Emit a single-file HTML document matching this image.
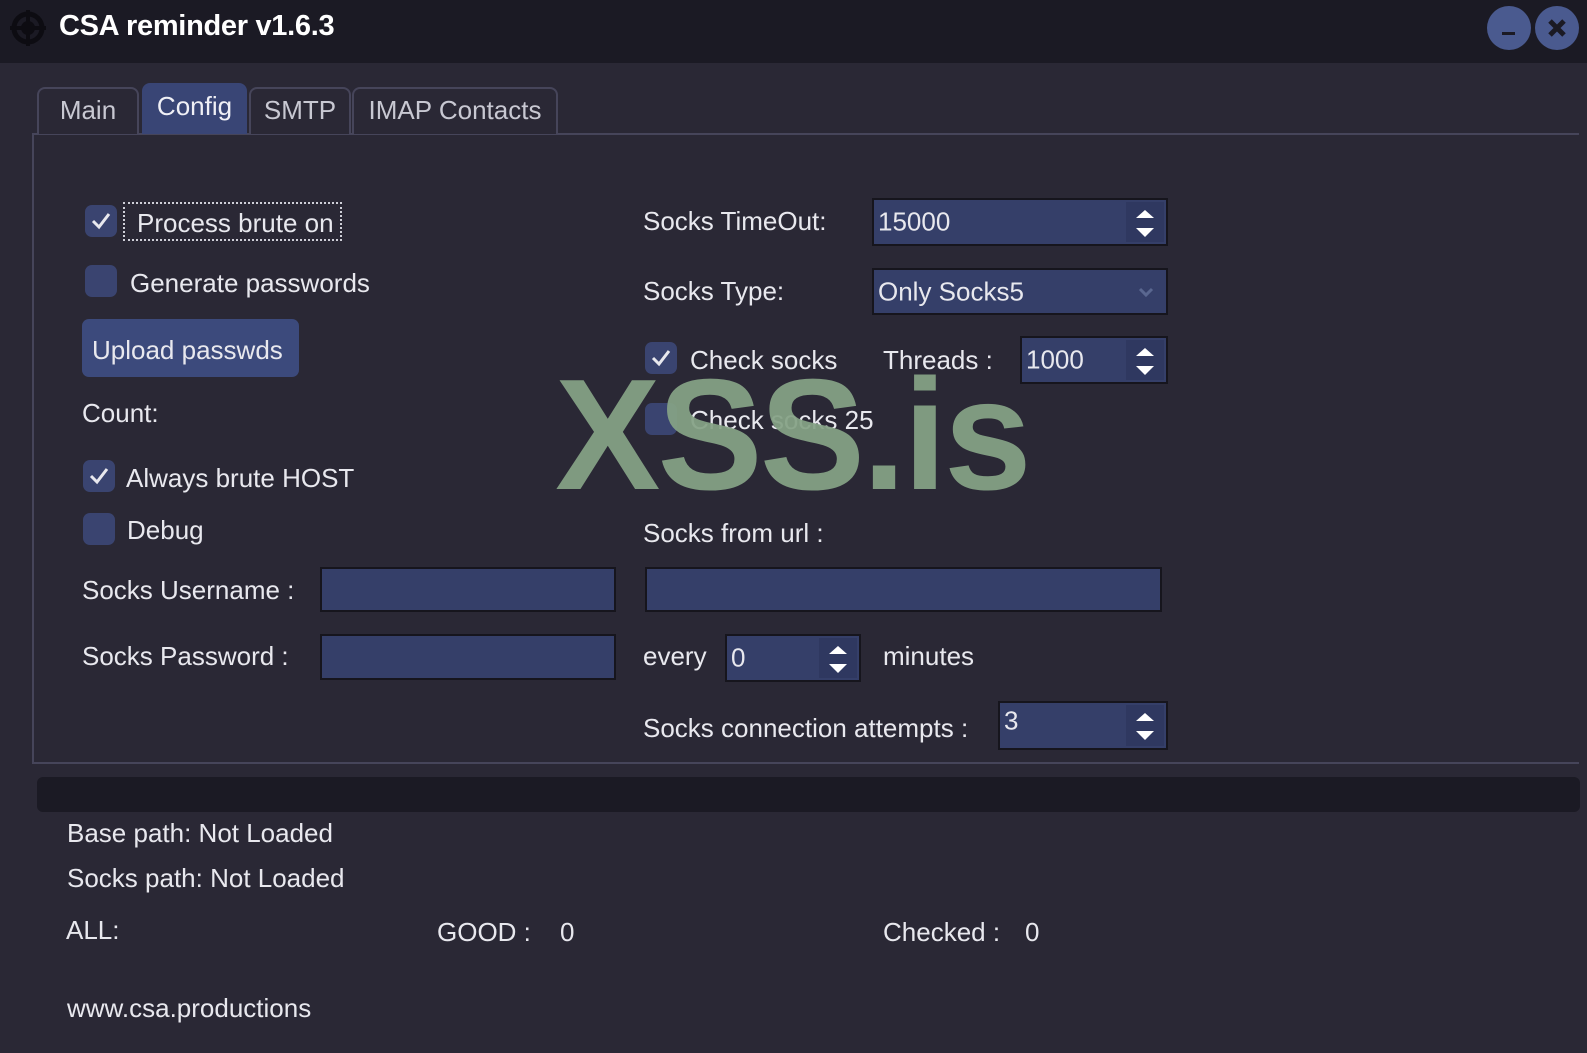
<!DOCTYPE html>
<html><head><meta charset="utf-8"><style>
*{margin:0;padding:0;box-sizing:border-box}
body{width:1587px;height:1053px;background:#2a2835;position:relative;overflow:hidden;font-family:"Liberation Sans",sans-serif;color:#e8e8ee;font-size:26px}
.a{position:absolute;white-space:nowrap}
.t{position:absolute;white-space:nowrap;line-height:30px;transform:translateY(-15px);letter-spacing:0px}
.cb{position:absolute;width:32px;height:32px;background:#3a4470;border-radius:7px}
.cb svg{position:absolute;left:6px;top:7px}
.in{position:absolute;background:#353f69;border:2px solid #16151d}
.in span{position:absolute;left:4px;top:50%;transform:translateY(-50%);font-size:26px}
.sp{position:absolute;right:2px;top:2px;bottom:2px;width:38px;background:#2f3860}
.tab{position:absolute;top:87px;height:47px;border:2px solid #46455a;border-bottom:none;border-radius:8px 8px 0 0;background:#2a2835;color:#c8c8d2;text-align:center;line-height:42px;font-size:26px}
</style></head><body>
<div class="a" style="left:0;top:0;width:1587px;height:63px;background:#1b1a24"></div>
<svg class="a" style="left:9px;top:9px" width="38" height="38" viewBox="0 0 38 38"><circle cx="19" cy="19" r="14" fill="none" stroke="#0d0c12" stroke-width="5"/><circle cx="19" cy="19" r="7" fill="#0d0c12"/><rect x="17" y="1" width="4" height="36" fill="#0d0c12"/><rect x="1" y="17" width="36" height="4" fill="#0d0c12"/></svg>
<div class="a" style="left:59px;top:10px;font-weight:bold;font-size:29px;color:#fff;letter-spacing:-0.3px">CSA reminder v1.6.3</div>
<div class="a" style="left:1487px;top:6px;width:44px;height:44px;border-radius:50%;background:#4a5a8f"></div>
<div class="a" style="left:1502px;top:32px;width:13px;height:3px;background:#1b1a24"></div>
<div class="a" style="left:1535px;top:6px;width:44px;height:44px;border-radius:50%;background:#4a5a8f"></div>
<svg class="a" style="left:1535px;top:6px" width="44" height="44"><path d="M15 15L29 29M29 15L15 29" stroke="#1b1a24" stroke-width="5"/></svg>

<div class="a" style="left:32px;top:133px;width:1547px;height:631px;border:2px solid #46455a;border-right:none"></div>
<div class="tab" style="left:37px;width:102px">Main</div>
<div class="tab" style="left:142px;top:83px;height:51px;width:105px;background:#394575;border-color:#394575;color:#f0f0f6">Config</div>
<div class="tab" style="left:249px;width:102px">SMTP</div>
<div class="tab" style="left:352px;width:206px">IMAP Contacts</div>

<div class="cb" style="left:85px;top:205px"><svg width="20" height="18"><path d="M2 9l6 6L18 2" stroke="#e8e8ee" stroke-width="3" fill="none"/></svg></div>
<div class="a" style="left:123px;top:202px;width:219px;height:39px;border:2px dotted #cfcfd8"></div>
<div class="t" style="left:137px;top:223px">Process brute on</div>
<div class="cb" style="left:85px;top:265px"></div>
<div class="t" style="left:130px;top:283px">Generate passwords</div>
<div class="a" style="left:82px;top:319px;width:217px;height:58px;background:#3c4a7c;border-radius:7px"></div>
<div class="t" style="left:92px;top:350px">Upload passwds</div>
<div class="t" style="left:82px;top:413px">Count:</div>
<div class="cb" style="left:83px;top:460px"><svg width="20" height="18"><path d="M2 9l6 6L18 2" stroke="#e8e8ee" stroke-width="3" fill="none"/></svg></div>
<div class="t" style="left:126px;top:478px">Always brute HOST</div>
<div class="cb" style="left:83px;top:513px"></div>
<div class="t" style="left:127px;top:530px">Debug</div>
<div class="t" style="left:82px;top:590px">Socks Username :</div>
<div class="in" style="left:320px;top:567px;width:296px;height:45px"></div>
<div class="t" style="left:82px;top:656px">Socks Password :</div>
<div class="in" style="left:320px;top:634px;width:296px;height:46px"></div>

<div class="t" style="left:643px;top:221px">Socks TimeOut:</div>
<div class="in" style="left:872px;top:198px;width:296px;height:48px"><span>15000</span><div class="sp"><svg width="38" height="44"><path d="M10 16L19 8L28 16Z M10 26L28 26L19 35Z" fill="#fff"/></svg></div></div>
<div class="t" style="left:643px;top:291px">Socks Type:</div>
<div class="in" style="left:872px;top:268px;width:296px;height:47px"><span>Only Socks5</span><svg class="a" style="right:12px;top:16px" width="16" height="12"><path d="M2 3L8 9L14 3" stroke="#5a6790" stroke-width="3" fill="none"/></svg></div>
<div class="cb" style="left:645px;top:342px"><svg width="20" height="18"><path d="M2 9l6 6L18 2" stroke="#e8e8ee" stroke-width="3" fill="none"/></svg></div>
<div class="t" style="left:690px;top:360px">Check socks</div>
<div class="t" style="left:883px;top:360px">Threads :</div>
<div class="in" style="left:1020px;top:336px;width:148px;height:48px"><span>1000</span><div class="sp"><svg width="38" height="44"><path d="M10 16L19 8L28 16Z M10 26L28 26L19 35Z" fill="#fff"/></svg></div></div>
<div class="cb" style="left:645px;top:403px"></div>
<div class="t" style="left:690px;top:420px">Check socks 25</div>
<div class="t" style="left:643px;top:533px">Socks from url :</div>
<div class="in" style="left:645px;top:567px;width:517px;height:45px"></div>
<div class="t" style="left:643px;top:656px">every</div>
<div class="in" style="left:725px;top:634px;width:136px;height:48px"><span>0</span><div class="sp"><svg width="38" height="44"><path d="M10 16L19 8L28 16Z M10 26L28 26L19 35Z" fill="#fff"/></svg></div></div>
<div class="t" style="left:883px;top:656px">minutes</div>
<div class="t" style="left:643px;top:728px">Socks connection attempts :</div>
<div class="in" style="left:998px;top:701px;width:170px;height:49px"><span style="top:40%">3</span><div class="sp"><svg width="38" height="44"><path d="M10 16L19 8L28 16Z M10 26L28 26L19 35Z" fill="#fff"/></svg></div></div>

<div class="a" style="left:555px;top:345px;font-weight:bold;font-size:158px;line-height:180px;color:#86a386;opacity:0.93;letter-spacing:-3px">XSS.is</div>

<div class="a" style="left:37px;top:777px;width:1543px;height:35px;background:#1b1a24;border-radius:6px"></div>
<div class="t" style="left:67px;top:833px">Base path: Not Loaded</div>
<div class="t" style="left:67px;top:878px">Socks path: Not Loaded</div>
<div class="t" style="left:66px;top:930px">ALL:</div>
<div class="t" style="left:437px;top:932px">GOOD :</div>
<div class="t" style="left:560px;top:932px">0</div>
<div class="t" style="left:883px;top:932px">Checked :</div>
<div class="t" style="left:1025px;top:932px">0</div>
<div class="t" style="left:67px;top:1008px">www.csa.productions</div>
</body></html>
